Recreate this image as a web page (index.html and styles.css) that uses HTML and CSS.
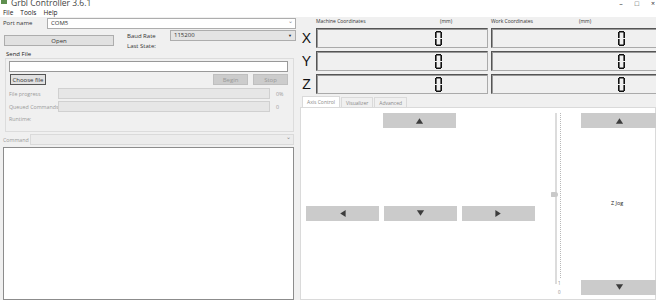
FILE: index.html
```html
<!DOCTYPE html>
<html lang="en">
  <head>
    <meta charset="UTF-8" />
    <title>Grbl Controller 3.6.1</title>
    <link rel="stylesheet" href="styles.css">
  </head>
  <body>
    <div class="titlebar">
      <span class="app-icon"></span>
      <span class="title">Grbl Controller 3.6.1</span>
      <span class="win-btns"><span>&#8211;</span><span>&#9633;</span><span>&#215;</span></span>
    </div>
    <div class="menubar">
      <span>File</span><span>Tools</span><span>Help</span>
    </div>

    <div class="main">
      <!-- Left: connection, file, log -->
      <div class="left">
        <div class="row port-row">
          <span class="lbl port-lbl">Port name</span>
          <div class="combo white">COM5<span class="chev">&#8964;</span></div>
        </div>

        <div class="row open-row">
          <button class="btn open-btn">Open</button>
          <div class="baud-col">
            <div class="row">
              <span class="lbl baud-lbl">Baud Rate</span>
              <div class="combo gray">115200<span class="tri">&#9660;</span></div>
            </div>
            <span class="lbl state-lbl">Last State:</span>
          </div>
        </div>

        <div class="group-title">Send File</div>
        <div class="group">
          <div class="file-input"></div>
          <div class="row file-btns">
            <button class="btn choose-btn">Choose file</button>
            <span class="spacer"></span>
            <button class="btn disabled">Begin</button>
            <button class="btn disabled">Stop</button>
          </div>
          <div class="row prog-row">
            <span class="lbl dim prog-lbl">File progress</span>
            <div class="bar"></div>
            <span class="lbl dim prog-val">0%</span>
          </div>
          <div class="row prog-row">
            <span class="lbl dim prog-lbl">Queued Commands</span>
            <div class="bar"></div>
            <span class="lbl dim prog-val">0</span>
          </div>
          <div class="lbl dim runtime">Runtime:</div>
        </div>

        <div class="row cmd-row">
          <span class="lbl dim cmd-lbl">Command</span>
          <div class="combo disabled-combo"><span class="chev">&#8964;</span></div>
        </div>
        <div class="log"></div>
      </div>

      <div class="splitter"></div>

      <!-- Right: coordinates and jog -->
      <div class="right">
        <div class="coord-head">
          <span class="ch-title">Machine Coordinates</span><span class="ch-unit">(mm)</span>
          <span class="ch-title work">Work Coordinates</span><span class="ch-unit">(mm)</span>
        </div>
        <div class="coord-rows">
          <div class="axis-row">
            <span class="axis">X</span>
            <div class="lcd"><svg class="digit" viewBox="0 0 7 15"><path d="M1 0.8h5M0.8 1v6M6.2 1v6M0.8 8v6M6.2 8v6M1 14.2h5"/></svg></div>
            <div class="lcd work"><svg class="digit" viewBox="0 0 7 15"><path d="M1 0.8h5M0.8 1v6M6.2 1v6M0.8 8v6M6.2 8v6M1 14.2h5"/></svg></div>
          </div>
          <div class="axis-row">
            <span class="axis">Y</span>
            <div class="lcd"><svg class="digit" viewBox="0 0 7 15"><path d="M1 0.8h5M0.8 1v6M6.2 1v6M0.8 8v6M6.2 8v6M1 14.2h5"/></svg></div>
            <div class="lcd work"><svg class="digit" viewBox="0 0 7 15"><path d="M1 0.8h5M0.8 1v6M6.2 1v6M0.8 8v6M6.2 8v6M1 14.2h5"/></svg></div>
          </div>
          <div class="axis-row">
            <span class="axis">Z</span>
            <div class="lcd"><svg class="digit" viewBox="0 0 7 15"><path d="M1 0.8h5M0.8 1v6M6.2 1v6M0.8 8v6M6.2 8v6M1 14.2h5"/></svg></div>
            <div class="lcd work"><svg class="digit" viewBox="0 0 7 15"><path d="M1 0.8h5M0.8 1v6M6.2 1v6M0.8 8v6M6.2 8v6M1 14.2h5"/></svg></div>
          </div>
        </div>

        <div class="tabs">
          <span class="tab active">Axis Control</span>
          <span class="tab">Visualizer</span>
          <span class="tab">Advanced</span>
        </div>
        <div class="panel">
          <div class="xy">
            <div class="jog-line center">
              <button class="jog"><svg class="arrow" viewBox="0 0 10 10"><path d="M1 8.5L5 2.5L9 8.5Z"/></svg></button>
            </div>
            <div class="jog-line mid">
              <button class="jog"><svg class="arrow" viewBox="0 0 10 10"><path d="M2.5 5L8.5 1L8.5 9Z"/></svg></button>
              <button class="jog"><svg class="arrow" viewBox="0 0 10 10"><path d="M1 1.5L9 1.5L5 7.5Z"/></svg></button>
              <button class="jog"><svg class="arrow" viewBox="0 0 10 10"><path d="M1.5 1L7.5 5L1.5 9Z"/></svg></button>
            </div>
          </div>
          <div class="slider">
            <div class="groove"></div>
            <div class="ticks"></div>
            <div class="handle"></div>
            <span class="sl-lbl one">1</span>
            <span class="sl-lbl zero">0</span>
          </div>
          <div class="zcol">
            <button class="jog"><svg class="arrow" viewBox="0 0 10 10"><path d="M1 8.5L5 2.5L9 8.5Z"/></svg></button>
            <span class="zlbl">Z Jog</span>
            <button class="jog"><svg class="arrow" viewBox="0 0 10 10"><path d="M1 1.5L9 1.5L5 7.5Z"/></svg></button>
          </div>
        </div>
      </div>
    </div>
  </body>
</html>
```

FILE: styles.css
```css
body {
  margin: 0;
  width: 656px;
  height: 300px;
  overflow: hidden;
  background-color: #f0f0f0;
  font-family: "Open Sans", "Noto Sans", sans-serif;
  font-size: 6px;
  color: #333;
}
button {
  font-family: inherit;
  font-size: 6px;
  padding: 0;
  margin: 0;
}
.row {
  display: flex;
  align-items: center;
}
.lbl {
  white-space: nowrap;
  flex: none;
}
.dim {
  color: #9a9a9a;
  font-size: 5.3px;
}

/* window chrome */
.titlebar {
  height: 8px;
  background-color: #fff;
  overflow: hidden;
  display: flex;
}
.app-icon {
  width: 6px;
  height: 4px;
  margin: 0 4px 0 1px;
  background-color: #5f8f4f;
}
.title {
  font-size: 8.5px;
  line-height: 9px;
  margin-top: -2px;
  color: #444;
}
.win-btns {
  margin-left: auto;
  display: flex;
  gap: 12px;
  font-size: 7px;
  line-height: 8px;
  margin-right: 1px;
  color: #333;
}
.menubar {
  height: 9px;
  background-color: #fff;
  display: flex;
  gap: 7px;
  padding-left: 3px;
  font-size: 6.5px;
  line-height: 9px;
  color: #222;
}

.main {
  display: flex;
  height: 283px;
}

/* left pane */
.left {
  width: 296px;
  flex: none;
  display: flex;
  flex-direction: column;
}
.port-row {
  padding: 1px 0 0 3px;
  height: 10px;
}
.port-lbl {
  width: 44px;
}
.combo {
  flex: 1;
  height: 9px;
  border: 1px solid #adadad;
  line-height: 9px;
  padding-left: 3px;
  position: relative;
}
.combo.white {
  background-color: #fff;
}
.combo.gray {
  background-color: #e4e4e4;
}
.chev {
  position: absolute;
  right: 2px;
  top: -2px;
  color: #888;
  font-size: 6px;
}
.tri {
  position: absolute;
  right: 3px;
  top: 0;
  font-size: 4px;
  color: #222;
}
.open-row {
  align-items: flex-start;
  margin-top: 2px;
}
.btn {
  flex: none;
  width: 35px;
  height: 11px;
  border: 1px solid #adadad;
  background-color: #e1e1e1;
  color: #333;
}
.btn.open-btn {
  width: 110px;
  margin: 5px 0 0 4px;
}
.baud-col {
  margin-left: 13px;
  flex: 1;
}
.baud-lbl {
  width: 43px;
}
.state-lbl {
  display: block;
  margin-top: 1px;
}
.group-title {
  margin: 1px 0 0 6px;
  line-height: 7px;
  color: #222;
}
.group {
  margin: 0 2px 0 5px;
  border: 1px solid #dcdcdc;
  height: 70px;
  padding: 2px 5px 0 3px;
}
.file-input {
  height: 9px;
  background-color: #fff;
  border: 1px solid #999;
}
.file-btns {
  margin-top: 2px;
  gap: 5px;
}
.spacer {
  flex: 1;
}
.btn.choose-btn {
  border-color: #555;
  margin-left: 1px;
  width: 36px;
}
.btn.disabled {
  background-color: #cccccc;
  border-color: #bfbfbf;
  color: #999;
}
.prog-row {
  margin-top: 3px;
  height: 11px;
}
.prog-row + .prog-row {
  margin-top: 2px;
}
.prog-lbl {
  width: 49px;
}
.bar {
  flex: none;
  width: 210px;
  height: 9px;
  border: 1px solid #d0d0d0;
  background-color: #e6e6e6;
}
.prog-val {
  margin-left: 6px;
}
.runtime {
  margin-top: 3px;
}
.cmd-row {
  margin-top: 2px;
  padding-left: 3px;
  padding-right: 2px;
}
.cmd-lbl {
  width: 27px;
}
.disabled-combo {
  background-color: #ececec;
  border-color: #dadada;
}
.log {
  margin: 2px 2px 0 3px;
  flex: 1;
  background-color: #fff;
  border: 1px solid #8c8c8c;
}

.splitter {
  width: 4px;
  flex: none;
}

/* right pane */
.right {
  flex: 1;
  display: flex;
  flex-direction: column;
  overflow: hidden;
}
.coord-head {
  display: flex;
  height: 11px;
  font-size: 5px;
  line-height: 9px;
  color: #333;
  padding-left: 16px;
}
.ch-title {
  width: 124px;
  flex: none;
}
.ch-unit {
  width: 51px;
  flex: none;
}
.ch-title.work {
  width: 88px;
}
.coord-rows {
  display: flex;
  flex-direction: column;
  gap: 3px;
}
.axis-row {
  display: flex;
  gap: 3px;
  height: 20px;
}
.axis {
  flex: none;
  width: 13px;
  font-family: "Liberation Sans", sans-serif;
  font-size: 14px;
  line-height: 20px;
  text-align: center;
  color: #111;
}
.lcd {
  width: 172px;
  flex: none;
  border: 1px solid #555;
  border-right-color: #aaa;
  border-bottom-color: #aaa;
  box-shadow: inset 1px 1px 0 #999;
  background-color: #f0f0f0;
  display: flex;
  align-items: center;
  justify-content: flex-end;
  padding-right: 45px;
  box-sizing: border-box;
}
.lcd.work {
  padding-right: 37px;
}
.digit {
  width: 7px;
  height: 15px;
}
.digit path {
  fill: none;
  stroke: #111;
  stroke-width: 1.6;
}

.tabs {
  display: flex;
  margin-top: 2px;
  height: 11px;
  padding-left: 2px;
}
.tab {
  padding: 0 4px;
  line-height: 10px;
  font-size: 5px;
  color: #888;
  border: 1px solid #dadada;
  border-bottom: none;
  margin-right: 1px;
  margin-top: 1px;
}
.tab.active {
  background-color: #fff;
  margin-top: 0;
}
.panel {
  flex: 1;
  background-color: #fff;
  border: 1px solid #dadada;
  display: flex;
}
.xy {
  width: 246px;
  flex: none;
  padding-top: 5px;
}
.jog-line {
  display: flex;
  gap: 5px;
  padding-left: 5px;
}
.jog-line.center {
  padding-left: 82px;
}
.jog-line.mid {
  margin-top: 78px;
}
.jog {
  flex: none;
  width: 73px;
  height: 15px;
  border: none;
  background-color: #cbcbcb;
  display: flex;
  align-items: center;
  justify-content: center;
}
.arrow {
  width: 9px;
  height: 9px;
}
.arrow path {
  fill: #3c3c3c;
}
.slider {
  width: 34px;
  flex: none;
  position: relative;
}
.groove {
  position: absolute;
  left: 8px;
  top: 5px;
  width: 2px;
  height: 171px;
  background-color: #dcdcdc;
}
.ticks {
  position: absolute;
  left: 13px;
  top: 5px;
  width: 1px;
  height: 166px;
  background-image: repeating-linear-gradient(#b8b8b8 0 1px, transparent 1px 2px);
}
.handle {
  position: absolute;
  left: 4px;
  top: 84px;
  width: 7px;
  height: 5px;
  background-color: #c9c9c9;
  border-radius: 1px 3px 3px 1px;
}
.sl-lbl {
  position: absolute;
  left: 11px;
  font-size: 4.5px;
  line-height: 5px;
  color: #888;
}
.sl-lbl.one {
  top: 173px;
}
.sl-lbl.zero {
  top: 182px;
}
.zcol {
  flex: 1;
  padding-top: 5px;
  display: flex;
  flex-direction: column;
  align-items: flex-start;
}
.zcol .jog {
  width: 76px;
}
.zlbl {
  margin: 0 0 0 30px;
  height: 152px;
  line-height: 150px;
  font-size: 5.5px;
  color: #222;
}
```
